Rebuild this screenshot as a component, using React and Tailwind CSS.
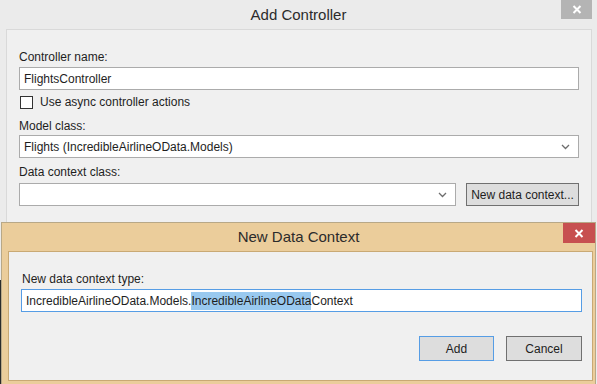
const CloseGlyph = () => (
  <svg width="10" height="9" viewBox="0 0 10 9" className="block">
    <path d="M1.5 1 L8.5 8 M8.5 1 L1.5 8" stroke="#ffffff" strokeWidth="2" />
  </svg>
);

const Chevron = () => (
  <svg width="9" height="6" viewBox="0 0 9 6" className="block">
    <path d="M1 1 L4.5 4.5 L8 1" fill="none" stroke="#6d6d6d" strokeWidth="1.3" />
  </svg>
);

const Label = ({ children, className = '' }) => (
  <div className={`h-[16px] leading-[16px] text-[#1e1e1e] ${className}`}>{children}</div>
);

const TextBox = ({ children, className = '' }) => (
  <div className={`h-[23px] bg-white border border-[#ababab] flex items-center pl-[4px] text-[#1e1e1e] ${className}`}>
    {children}
  </div>
);

const ComboBox = ({ children, className = '' }) => (
  <div className={`h-[23px] bg-white border border-[#ababab] flex items-center justify-between pl-[4px] pr-[8px] text-[#1e1e1e] ${className}`}>
    <span>{children}</span>
    <Chevron />
  </div>
);

const AddControllerDialog = () => (
  <div className="h-[222px] flex flex-col">
    <div className="relative h-[29px] shrink-0">
      <div className="text-center text-[15px] leading-[29px] text-[#2b2b2b]">Add Controller</div>
      <div className="absolute top-0 right-[5px] w-[31px] h-[19px] bg-[#b4b4b4] flex items-center justify-center">
        <CloseGlyph />
      </div>
    </div>
    <div className="flex-1 ml-[6px] mr-[5px] bg-[#f0f0f0] border border-b-0 border-[#d9d9d9] pt-[19px] pl-[12px] pr-[12px]">
      <Label>Controller name:</Label>
      <TextBox className="mt-[2px]">FlightsController</TextBox>
      <div className="mt-[6px] h-[13px] flex items-center">
        <div className="w-[13px] h-[13px] ml-px bg-white border border-[#333333]" />
        <span className="ml-[7px] text-[#1e1e1e] leading-[13px]">Use async controller actions</span>
      </div>
      <Label className="mt-[9px]">Model class:</Label>
      <ComboBox className="mt-px">Flights (IncredibleAirlineOData.Models)</ComboBox>
      <Label className="mt-[6px]">Data context class:</Label>
      <div className="mt-[3px] flex gap-[10px]">
        <ComboBox className="w-[437px]"></ComboBox>
        <div className="w-[113px] h-[23px] bg-[#dddddd] border border-[#707070] flex items-center justify-center text-[#1e1e1e]">
          New data context...
        </div>
      </div>
    </div>
  </div>
);

const NewDataContextDialog = () => (
  <div className="h-[162px] flex">
    <div className="w-px flex flex-col">
      <div className="h-[58px] bg-[#ebebeb]" />
      <div className="flex-1 bg-[#2b2b2b]" />
    </div>
    <div className="w-[595px] h-[170px] bg-[#ebcd9b] border border-[#b8a887] flex flex-col">
      <div className="relative h-[28px] shrink-0">
        <div className="text-center text-[15px] leading-[28px] text-[#2b2b2b]">New Data Context</div>
        <div className="absolute top-0 right-0 w-[32px] h-[20px] bg-[#c75050] flex items-center justify-center">
          <CloseGlyph />
        </div>
      </div>
      <div className="ml-[6px] mr-[2px] h-[130px] bg-[#f0f0f0] border border-[#c9a974] pt-[19px] pl-[12px] pr-[10px]">
        <Label className="ml-px">New data context type:</Label>
        <div className="mt-[2px] h-[23px] bg-white border border-[#569de5] flex items-center pl-[4px] text-[#1e1e1e] whitespace-nowrap">
          <span>IncredibleAirlineOData.Models.</span>
          <span className="bg-[#99c9ef]">IncredibleAirlineOData</span>
          <span>Context</span>
        </div>
        <div className="mt-[24px] flex justify-end gap-[12px]">
          <div className="w-[75px] h-[25px] bg-[#dddddd] border border-[#569de5] flex items-center justify-center text-[#1e1e1e]">
            Add
          </div>
          <div className="w-[76px] h-[25px] bg-[#dddddd] border border-[#707070] flex items-center justify-center text-[#1e1e1e]">
            Cancel
          </div>
        </div>
      </div>
    </div>
  </div>
);

export default function App() {
  return (
    <div className="w-[597px] h-[384px] overflow-hidden bg-[#ebebeb] font-['Liberation_Sans',Arial,sans-serif] text-[12px]">
      <AddControllerDialog />
      <NewDataContextDialog />
    </div>
  );
}
